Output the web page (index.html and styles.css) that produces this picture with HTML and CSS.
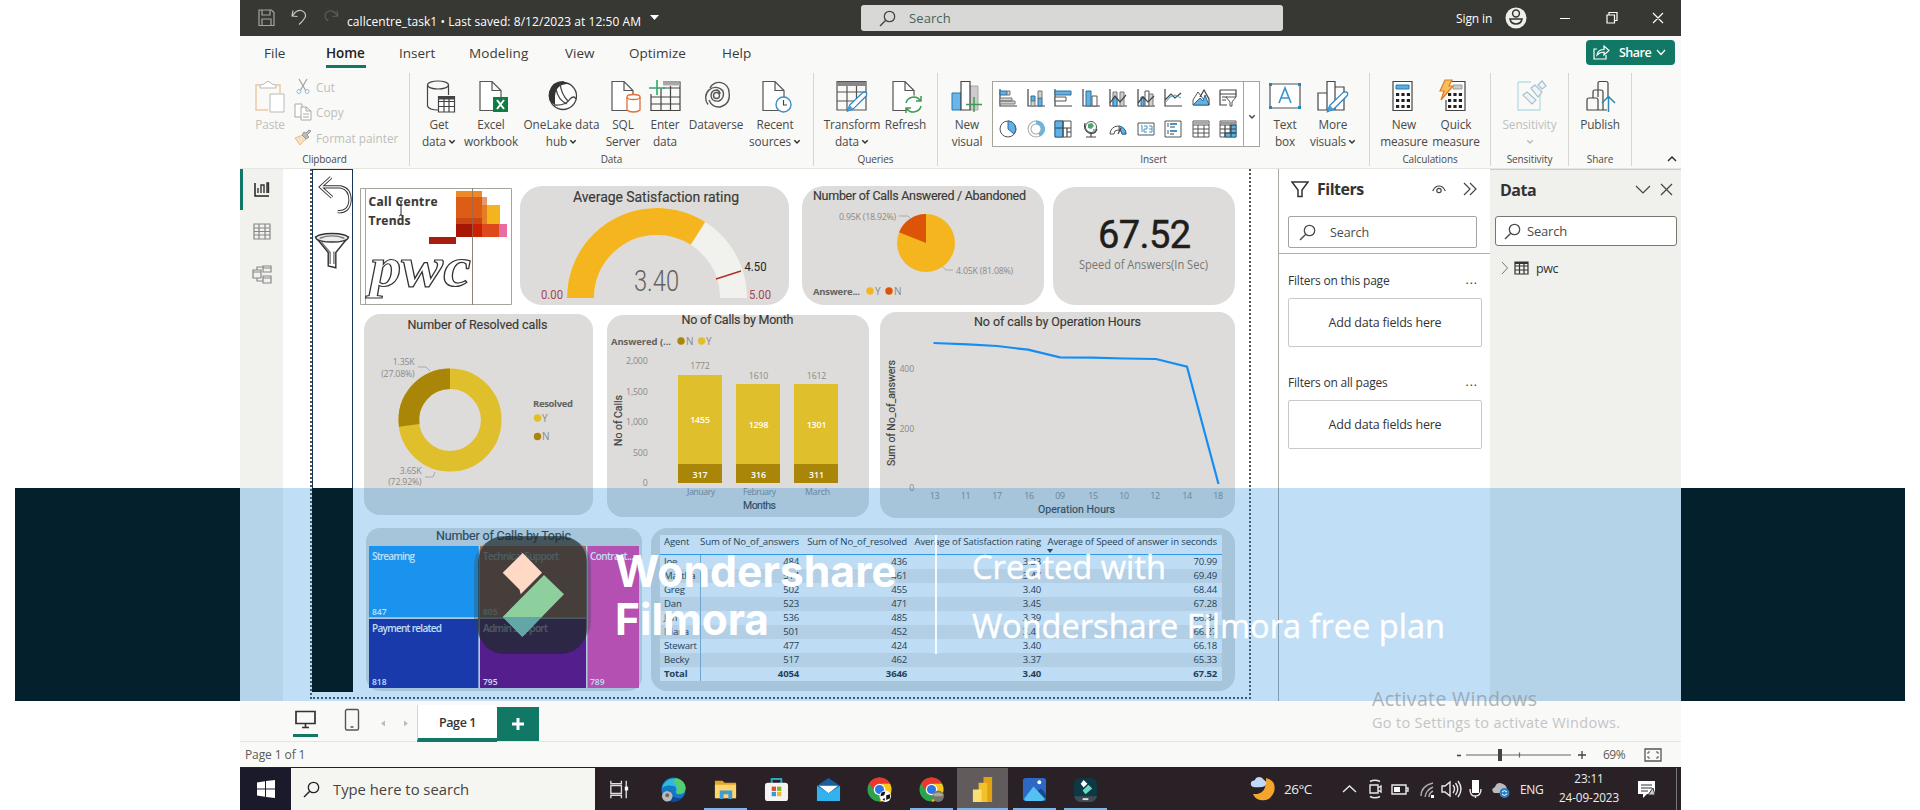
FILE: index.html
```html
<!DOCTYPE html>
<html lang="en">
<head>
<meta charset="utf-8">
<title>callcentre_task1</title>
<link rel="stylesheet" href="styles.css">
</head>
<body>
<svg class="defs" width="0" height="0">
  <symbol id="mag" viewBox="0 0 17 17"><circle cx="10.5" cy="6.5" r="5.2" fill="none" stroke="currentColor" stroke-width="1.3"/><path d="M6.8 10.2L1 16" stroke="currentColor" stroke-width="1.4"/></symbol>
  <symbol id="down" viewBox="0 0 8 6"><path d="M1.3 1.2L4 4L6.7 1.2" fill="none" stroke="currentColor" stroke-width="1.5"/></symbol>
  <symbol id="page" viewBox="0 0 32 34"><path d="M5 1.500H17L26 10.500V30.500H5ZM17 1.500V10.500H26" fill="#fff" stroke="#555" stroke-width="1.2"/></symbol>
  <symbol id="pencil" viewBox="0 0 24 24"><path d="M1.500 22.500L4 16L18 2.500Q21 1 22.500 3Q23 5 21.500 6.500L8 20Z" fill="#fff" stroke="#2484c0" stroke-width="1.3"/><path d="M1.500 22.500L4 16L8 20Z" fill="#45a0dc"/></symbol>
  <symbol id="chrome" viewBox="0 0 26 26"><circle cx="13" cy="13" r="12.500" fill="#2fa24c"/><path d="M2.200 6.700A12.500 12.500 0 0 1 23.800 6.700L13 7Z" fill="#e8392c"/><path d="M2.200 6.700L8 15L13 7H24Z" fill="#e8392c"/><path d="M23.900 7A12.500 12.500 0 0 1 13 25.500L18.500 15L15 7Z" fill="#fac619"/><circle cx="13" cy="13" r="6" fill="#fff"/><circle cx="13" cy="13" r="4.700" fill="#2d75e8"/></symbol>
</svg>

<div class="window">
  <header class="titlebar">
    <svg class="quick" viewBox="0 0 84 22"><g fill="none" stroke="#a5a5a0" stroke-width="1.2"><path d="M1 3H13.500L16 5.500V18.500H1ZM4 3V8H12V3M4 18.500V12H13V18.500"/><path d="M35 3.500L34 9L39.500 9.500M34.500 9Q38 3 43 3.500Q48 5 47.500 9.500Q46 13 41 17.500" stroke="#c5c5c0"/><path d="M79 3.500L80 9L74.500 9.500M79.500 9Q76 3 71 4Q66 6 67.500 11L70 14" stroke="#5d5d58"/></g></svg>
    <span class="doc">callcentre_task1 • Last saved: 8/12/2023 at 12:50 AM</span>
    <svg class="tri" viewBox="0 0 10 6"><path d="M0 0H9L4.500 5Z" fill="#fff"/></svg>
    <div class="topsearch"><svg class="mag" ><use href="#mag"/></svg><span>Search</span></div>
    <span class="signin">Sign in</span>
    <svg class="avatar" viewBox="0 0 22 22"><circle cx="11" cy="11" r="10.500" fill="#efefea"/><circle cx="11" cy="6.500" r="3.400" fill="none" stroke="#333" stroke-width="1.500"/><path d="M5 12H17Q16 17 11 17Q6 17 5 12Z" fill="none" stroke="#333" stroke-width="1.500"/></svg>
    <svg class="wctl" viewBox="0 0 106 14"><g stroke="#fff" fill="none" stroke-width="1.200"><path d="M0 7.500H10M47 4H54.500V12H47ZM49 4V1.500H57V9.500H54.500M93 2L103 12M103 2L93 12"/></g></svg>
  </header>

  <nav class="tabs">
    <span class="t-file">File</span><span class="t-home">Home</span><span class="t-insert">Insert</span><span class="t-model">Modeling</span><span class="t-view">View</span><span class="t-opt">Optimize</span><span class="t-help">Help</span>
    <button class="share"><svg width="17" height="15" viewBox="0 0 17 15"><path d="M4 4H1V14H13V10M4 10Q5 4.500 11 4.500V1L16 5.500L11 10V7Q7 7 4 10Z" fill="none" stroke="#fff" stroke-width="1.200"/></svg><b>Share</b><svg width="10" height="7" viewBox="0 0 10 7"><path d="M1 1L5 5.500L9 1" fill="none" stroke="#fff" stroke-width="1.300"/></svg></button>
  </nav>

  <section class="ribbon">
    <div class="group g-clip">
      <div class="btns disabled">
        <div class="btn"><svg viewBox="0 0 32 34"><path d="M6 5H2V30H14M22 5H26V13" fill="none" stroke="#eec9a4" stroke-width="1.500"/><path d="M6 8V5L10 4Q14 -1 18 4L22 5V8ZM16 14H30V32H16Z" fill="#fff" stroke="#b9b9b5"/></svg><span>Paste</span></div>
        <div class="minis">
          <div><svg viewBox="0 0 18 18"><path d="M5 1L12 13M13 1L6 13" stroke="#a3a3a0" stroke-width="1.200"/><path d="M3 13.500a2 2 0 1 0 4 0a2 2 0 1 0-4 0M11 13.500a2 2 0 1 0 4 0a2 2 0 1 0-4 0" fill="none" stroke="#9bbdd6"/></svg>Cut</div>
          <div><svg viewBox="0 0 18 18"><path d="M7 14H1V1H8V4M7 4H12L17 8V17H7ZM12 4V8H17M9 11H15M9 14H15" fill="#fff" stroke="#a9a9a5"/></svg>Copy</div>
          <div><svg viewBox="0 0 18 18"><path d="M1 9L9 6L12 10L6 16Z" fill="#f8dfc4" stroke="#e5bd97"/><path d="M8 6L12 10L15 8L13 6L17 2L15 1L12 4L10 3Z" fill="#bbb" stroke="#999"/></svg>Format painter</div>
        </div>
      </div><h6>Clipboard</h6>
    </div>

    <div class="group g-data">
      <div class="btns">
        <div class="btn"><svg viewBox="0 0 32 34"><g fill="none" stroke="#444" stroke-width="1.200"><ellipse cx="15" cy="5" rx="10.500" ry="4"/><path d="M4.500 5V26Q6 30 15 30M25.500 5V15"/><path d="M15.500 16.500H31.500V32H15.500ZM15.500 21.500H31.500M15.500 26.500H31.500M21 16.500V32M26 16.500V32" fill="#fff"/><path d="M15.500 18H31.500" stroke-width="3"/></g></svg><span>Get<br>data<i><svg><use href="#down"/></svg></i></span></div>
        <div class="btn"><svg viewBox="0 0 32 34"><use href="#page"/><path d="M18 17H33V32H18Z" fill="#107c41"/><path d="M22 20L29 29M29 20L22 29" stroke="#fff" stroke-width="2"/></svg><span>Excel<br>workbook</span></div>
        <div class="btn"><svg viewBox="0 0 32 34"><circle cx="17" cy="16" r="13.500" fill="#fff" stroke="#444" stroke-width="1.300"/><path d="M9 25Q1 21 3 12Q6 1 17 1L22 4Q10 4 9 16Z" fill="#333"/><path d="M10 9Q12 20 21 24M14 3Q15 14 22 21M8 25Q20 26 24 19Q28 15 30 19" fill="none" stroke="#444" stroke-width="1.300"/></svg><span>OneLake data<br>hub<i><svg><use href="#down"/></svg></i></span></div>
        <div class="btn"><svg viewBox="0 0 32 34"><use href="#page"/><path d="M20 17V30Q22 32 26.500 32Q31 32 33 30V17" fill="#fff" stroke="#dd7136" stroke-width="1.300"/><ellipse cx="26.500" cy="17" rx="6.500" ry="2.500" fill="#fff" stroke="#dd7136" stroke-width="1.300"/></svg><span>SQL<br>Server</span></div>
        <div class="btn"><svg viewBox="0 0 32 34"><path d="M2 14V30.500H31V2H14M2 17H31M2 24H31M12 8V30.500M21.500 6V30.500M14 8H31" fill="none" stroke="#444" stroke-width="1.200"/><path d="M14 4H31" stroke="#aaa" stroke-width="3"/><path d="M8 0V15M0 8H16" stroke="#35a56b" stroke-width="1.600"/></svg><span>Enter<br>data</span></div>
        <div class="btn"><svg viewBox="0 0 32 34"><g fill="none" stroke="#555" stroke-width="1.400"><path d="M8 24.500A9.500 10 0 1 1 23 11Q25 18 19 21Q12 22 11 16Q11 10 17 10Q20 11 20 14"/><path d="M10 8A10 10 0 0 1 29 12Q31 24 20 27Q12 27.500 9 20"/><circle cx="16.500" cy="15.500" r="3"/></g></svg><span>Dataverse</span></div>
        <div class="btn"><svg viewBox="0 0 32 34"><use href="#page" x="-1"/><circle cx="24.500" cy="24.500" r="7.500" fill="#fff" stroke="#3991bf" stroke-width="1.400"/><path d="M24.500 20V25H28" fill="none" stroke="#444" stroke-width="1.200"/></svg><span>Recent<br>sources<i><svg><use href="#down"/></svg></i></span></div>
      </div><h6>Data</h6>
    </div>

    <div class="group g-query">
      <div class="btns">
        <div class="btn"><svg viewBox="0 0 32 34"><path d="M1 1.500H30V30H1ZM1 12H30M1 21H20M11 6V30M20.500 6V22" fill="none" stroke="#555" stroke-width="1.200"/><path d="M1 4H30" stroke="#888" stroke-width="4"/><use href="#pencil" x="10" y="10" width="22" height="23"/></svg><span>Transform<br>data<i><svg><use href="#down"/></svg></i></span></div>
        <div class="btn"><svg viewBox="0 0 32 34"><use href="#page" x="-2"/><circle cx="23.500" cy="24.500" r="9" fill="#fff"/><path d="M16 23A8 8 0 0 1 30 20M31 16V21H26M31 26A8 8 0 0 1 17 29M16 33V28H21" fill="none" stroke="#3e9a55" stroke-width="1.500"/></svg><span>Refresh</span></div>
      </div><h6>Queries</h6>
    </div>

    <div class="group g-insert">
      <div class="btns">
        <div class="btn"><svg viewBox="0 0 32 34"><path d="M1 13H10V30H1Z" fill="#6ab5ea" stroke="#2779ae"/><path d="M19 6H27V30H19Z" fill="#ccc" stroke="#aaa"/><path d="M10 1.500H19V30H10Z" fill="#fff" stroke="#444" stroke-width="1.200"/><path d="M23 17V32M15 24.500H31" stroke="#3e9a55" stroke-width="1.500"/></svg><span>New<br>visual</span></div>
        <div class="gallery">
          <div class="cells">
            <svg viewBox="0 0 18 18"><path d="M1 0V17H18" class="ax"/><path d="M1 2H8V6H1Z" class="bl"/><path d="M8 2H11V6H8ZM1 9H13V12H1ZM1 12H16V15H1Z" class="gr"/></svg>
            <svg viewBox="0 0 18 18"><path d="M1 0V17H18" class="ax"/><path d="M4 7H8V12H4ZM11 9H15V17H11Z" class="bl"/><path d="M4 12H8V17H4ZM11 2H15V9H11Z" class="gr"/></svg>
            <svg viewBox="0 0 18 18"><path d="M1 0V17H18" class="ax"/><path d="M1 2H17V6H1Z" class="bl"/><path d="M1 8H12V12H1Z" class="wh"/></svg>
            <svg viewBox="0 0 18 18"><path d="M1 0V17H18" class="ax"/><path d="M4 2H9V17H4Z" class="bl"/><path d="M10 7H15V17H10Z" class="wh"/></svg>
            <svg viewBox="0 0 18 18"><path d="M1 0V17H18" class="ax"/><path d="M4 3H8V17H4ZM11 3H15V17H11Z" class="gr"/><path d="M4 9H8V17H4Z" class="bl"/><path d="M1 14L6 7L11 13L17 6" class="ax"/></svg>
            <svg viewBox="0 0 18 18"><path d="M1 0V17H18" class="ax"/><path d="M4 8H7V17H4Z" class="bl"/><path d="M8 2H12V17H8Z" class="wh"/><path d="M12 5H16V17H12Z" class="gr"/><path d="M1 14L6 8L11 13L17 7" class="ax"/></svg>
            <svg viewBox="0 0 18 18"><path d="M1 0V17H18M1 11L7 5L11 9L17 4" class="ax"/><path d="M1 14L6 8L11 6L17 9" fill="none" stroke="#4c9dcc"/></svg>
            <svg viewBox="0 0 18 18"><path d="M1 11L6 3L12 11L17 16H1Z" class="wh"/><path d="M1 16L8 9L11 12L13 6L17 16Z" class="bl"/><path d="M8 8L12 1L17 10V16" class="ax"/></svg>
            <svg viewBox="0 0 18 18"><path d="M1 1H17V8M1 1V16H8M1 5H17M3 8H8M3 11H7" class="ax"/><path d="M7 8H17L13 13V17H11V13Z" class="wh"/></svg>
            <svg viewBox="0 0 18 18"><circle cx="9" cy="9" r="8" class="wh"/><path d="M9 9V1A8 8 0 0 1 15 14Z" class="bl"/></svg>
            <svg viewBox="0 0 18 18"><circle cx="9" cy="9" r="6.500" fill="none" stroke="#aaa" stroke-width="4"/><circle cx="9" cy="9" r="6.500" fill="none" stroke="#fff" stroke-width="2"/><path d="M9 2.500A6.500 6.500 0 0 1 12 15" fill="none" stroke="#6eb4df" stroke-width="4"/></svg>
            <svg viewBox="0 0 18 18"><path d="M1 1H17V17H1Z" class="wh"/><path d="M1 1H9V8H1ZM1 8H9V17H1Z" class="bl"/><path d="M9 8H17M13 8V17M9 1V17M13 12H17" class="ax"/></svg>
            <svg viewBox="0 0 18 18"><circle cx="9" cy="7" r="5.500" class="wh"/><path d="M6 4L10 3L12 6L9 9L6 8ZM11 9L13 9L11 11Z" fill="#52a573"/><path d="M3 3Q1 10 7 13Q13 15 15 9M9 14V17M4 17H14" class="ax"/></svg>
            <svg viewBox="0 0 18 18"><path d="M1 14A8 8 0 0 1 17 14H13A4 4 0 0 0 5 14Z" class="wh"/><path d="M10 6A8 8 0 0 1 17 14H13A4 4 0 0 0 10 10Z" class="bl"/><path d="M9 14L12 8" class="ax"/></svg>
            <svg viewBox="0 0 18 18"><path d="M1 3H17V15H1Z" class="wh"/><path d="M4 6L5 5.500V12M7 6H10V9H7V12H10M12 6H15V12H12M12 9H15" fill="none" stroke="#3f96c8"/></svg>
            <svg viewBox="0 0 18 18"><path d="M1 1H17V17H1ZM4 3V7M4 10V14" class="wh"/><path d="M6 4H13M6 11H13" stroke="#3f96c8" stroke-width="2"/><path d="M6 7H11M6 14H10" class="ax"/></svg>
            <svg viewBox="0 0 18 18"><path d="M1 1H17V17H1ZM1 5H17M1 9H17M1 13H17M6 5V17M12 5V17" class="wh"/><path d="M1 3H17" stroke="#aaa" stroke-width="2"/></svg>
            <svg viewBox="0 0 18 18"><path d="M1 1H17V17H1Z" class="wh"/><path d="M11 5H17V13H11ZM6 13H17V17H6Z" class="bl"/><path d="M1 5H17M1 9H17M1 13H17M6 5V17M12 5V17" class="ax"/><path d="M1 3H17" stroke="#999" stroke-width="2"/></svg>
          </div>
          <div class="more"><svg width="8" height="6"><use href="#down"/></svg></div>
        </div>
        <div class="btn"><svg viewBox="0 0 32 34"><path d="M1 4H31V28H1Z" fill="#fff" stroke="#555" stroke-width="1.200"/><path d="M0 3H3V6H0ZM29 3H32V6H29ZM0 26H3V29H0ZM29 26H32V29H29Z" fill="#2484c0"/><path d="M10 23L16 8L22 23M12 18H20" fill="none" stroke="#3795ca" stroke-width="1.600"/></svg><span>Text<br>box</span></div>
        <div class="btn"><svg viewBox="0 0 32 34"><path d="M1 13H10V30H1ZM18 7H27V30H18ZM10 1.500H18V30H10Z" fill="#fff" stroke="#444" stroke-width="1.200"/><use href="#pencil" x="9" y="10" width="23" height="23"/></svg><span>More<br>visuals<i><svg><use href="#down"/></svg></i></span></div>
      </div><h6>Insert</h6>
    </div>

    <div class="group g-calc">
      <div class="btns">
        <div class="btn"><svg viewBox="0 0 32 34"><path d="M5 1.500H24V30.500H5Z" fill="#fff" stroke="#444" stroke-width="1.200"/><path d="M8 5H21V9H8Z" fill="#5aaee2" stroke="#2779ae"/><path d="M8 14.500H22M8 20.500H22M8 26.500H22" stroke="#222" stroke-width="3.200" stroke-dasharray="3.200 2.200"/></svg><span>New<br>measure</span></div>
        <div class="btn"><svg viewBox="0 0 32 34"><path d="M7 1.500H25V30.500H6V20" fill="#fff" stroke="#444" stroke-width="1.200"/><path d="M13 5H22V9H13Z" fill="#ccc" stroke="#999"/><path d="M8 14.500H22M8 20.500H22M8 26.500H22" stroke="#222" stroke-width="3.200" stroke-dasharray="3.200 2.200"/><path d="M5 0H12L9 6H13L1 20L4 11H0Z" fill="#f8bd5c" stroke="#df7d2b" stroke-width="1.200"/></svg><span>Quick<br>measure</span></div>
      </div><h6>Calculations</h6>
    </div>

    <div class="group g-sens">
      <div class="btns disabled">
        <div class="btn"><svg viewBox="0 0 32 34"><path d="M4 2H17M26 15V30H4V2" fill="none" stroke="#b9dbe6" stroke-width="1.300"/><path d="M9 15L13 12L22 20L18 24ZM17 8L21 5L28 12L24 17ZM24 5L28 1L32 6L28 9Z" fill="#eef5f8" stroke="#a8bfcd" stroke-width="1.200"/></svg><span>Sensitivity<br><i class="solo"><svg><use href="#down"/></svg></i></span></div>
      </div><h6>Sensitivity</h6>
    </div>
    <div class="group g-share">
      <div class="btns">
        <div class="btn"><svg viewBox="0 0 32 34"><path d="M14 17V3Q14 1.500 15.500 1.500H22Q24 1.500 24 3V17M9 18V12Q9 10 11 10H17Q19 10 19 12V30M3 20Q3 18 5 18H12Q14 18 14 20V30H3ZM14 30H23" fill="none" stroke="#444" stroke-width="1.200"/><path d="M24.500 32V17M18 23L24.500 16.500L31 23" fill="none" stroke="#2e88ad" stroke-width="1.500"/></svg><span>Publish</span></div>
      </div><h6>Share</h6>
    </div>
    <svg class="collapse" viewBox="0 0 10 6"><path d="M1 5L5 1L9 5" fill="none" stroke="#333" stroke-width="1.500"/></svg>
  </section>

  <main class="work">
    <aside class="rail">
      <svg width="18" height="18" viewBox="0 0 18 18"><path d="M2 2V15H16" fill="none" stroke="#222" stroke-width="1.500"/><path d="M5 7V12M8 12V4H11V12M14 12V2H15.500V12" fill="none" stroke="#333" stroke-width="1.400"/></svg>
      <svg width="18" height="17" viewBox="0 0 18 17"><path d="M1 1H17V16H1ZM1 5H17M1 8.500H17M1 12H17M6 1V16M12 1V16" fill="none" stroke="#888" stroke-width="1.200"/></svg>
      <svg width="20" height="20" viewBox="0 0 20 20"><path d="M1 6H9V14H1ZM11 2H19V8H11ZM11 12H19V19H11ZM1 8H9M11 4H19M11 14H19M5 6V3H11M5 14V17H11" fill="none" stroke="#888" stroke-width="1.200"/></svg>
    </aside>

    <div class="canvas">
      <div class="pageedge"></div>
      <div class="strip">
        <svg viewBox="312 169 41 110"><path d="M331 175L320 185L332 196M320 185H341Q351 187 351 199Q350 212 338 211" fill="none" stroke="#333" stroke-width="3.500"/><path d="M331 175L320 185L332 196M320 185H341Q351 187 351 199Q350 212 338 211" fill="none" stroke="#fff" stroke-width="1.500"/><path d="M315 238L328 254V268L336 270V254L349 238Z" fill="#fff" stroke="#333" stroke-width="1.500"/><ellipse cx="332" cy="238.500" rx="17" ry="4.500" fill="#eee" stroke="#333" stroke-width="1.500"/><path d="M319 239Q332 234 345 239M320 242L330 254V266M334 266V253" fill="none" stroke="#777" stroke-width="1.500"/></svg>
      </div>

      <div class="visual v-logo">
        <svg viewBox="360 188 153 118"><path d="M360.500 188.500H511.500V304.500H360.500ZM365.500 188V305M472.500 188V305" fill="#fff" stroke="#a5a59e"/>
          <path d="M456 191H482V225H456Z" fill="#ee8a25"/><path d="M456 197H482V225H456Z" fill="#dd5d16"/><path d="M482 197H487V225H482Z" fill="#e9986b"/><path d="M487 205H500V225H487Z" fill="#f2b51d"/><path d="M482 205H487V225H482Z" fill="#e57d22"/><path d="M456 218H482V225H456Z" fill="#cc4515"/><path d="M456 224H472V237H456Z" fill="#a61602"/><path d="M472 224H482V237H472Z" fill="#cb2003"/><path d="M482 224H499V237H482Z" fill="#dc491b"/><path d="M499 224H507V237H499Z" fill="#e86ba2"/><path d="M429 237H456V244H429Z" fill="#a91d10"/><path d="M472.500 188V305" stroke="#8a6d5c" opacity=".6"/>
          <g class="ttl b"><text x="368.500" y="205.500" textLength="69">Call Centre</text><text x="368.500" y="224.500" textLength="42">Trends</text></g>
          <path d="M399 200Q401 200 401 203V214Q401 216 399 216M403 200Q401 200 401 203M401 214Q401 216 403 216" fill="none" stroke="#333"/>
          <text x="370" y="286" textLength="101" lengthAdjust="spacingAndGlyphs" class="pwc">pwc</text></svg>
      </div>

      <div class="visual v-gauge">
        <svg viewBox="520 186 269 119"><text x="573" y="201.500" textLength="166" class="ttl m14">Average Satisfaction rating</text>
          <path d="M580.500 298A76.500 76.500 0 0 1 733.500 298" pathLength="100" fill="none" stroke="#f1f1ee" stroke-width="27"/>
          <path d="M580.500 298A76.500 76.500 0 0 1 733.500 298" pathLength="100" fill="none" stroke="#f5b51e" stroke-width="27" stroke-dasharray="68 100"/>
          <path d="M716 279L741 271" stroke="#b02f28" stroke-width="1.500"/>
          <text x="634" y="291" textLength="45" lengthAdjust="spacingAndGlyphs" class="din" font-size="29" fill="#63625e">3.40</text>
          <g class="din small"><text x="541" y="299" textLength="22" lengthAdjust="spacingAndGlyphs" fill="#a34553">0.00</text><text x="744.500" y="270.500" textLength="22" lengthAdjust="spacingAndGlyphs" fill="#222">4.50</text><text x="749" y="299" textLength="22" lengthAdjust="spacingAndGlyphs" fill="#a34553">5.00</text></g></svg>
      </div>

      <div class="visual v-pie">
        <svg viewBox="802 186 242 119"><text x="813" y="199.500" textLength="213" class="ttl">Number of Calls Answered / Abandoned</text>
          <circle cx="926" cy="243" r="29" fill="#f5b51e"/><path d="M926 243V214A29 29 0 0 0 899.100 232.200Z" fill="#dc5408"/>
          <g class="lab"><text x="839" y="219.500" textLength="57">0.95K (18.92%)</text><text x="956" y="273.500" textLength="57">4.05K (81.08%)</text></g>
          <path d="M899 216H908L911 219M943 267L946 270H953" fill="none" stroke="#aaa"/>
          <text x="813" y="294.500" textLength="47" class="leg">Answere...</text><circle cx="870" cy="291" r="3.700" fill="#f5b51e"/><circle cx="889" cy="291" r="3.700" fill="#dc5408"/><g class="lg"><text x="875" y="294.500">Y</text><text x="894" y="294.500">N</text></g></svg>
      </div>

      <div class="visual v-kpi">
        <svg viewBox="1053 187 182 118"><text x="1098" y="248" textLength="93" class="din" font-size="38" fill="#1f1e1b" stroke="#1f1e1b" stroke-width=".5">67.52</text><text x="1079" y="269" textLength="129" lengthAdjust="spacingAndGlyphs" font-size="12" fill="#777671">Speed of Answers(In Sec)</text></svg>
      </div>

      <div class="visual v-res">
        <svg viewBox="364 314 229 201"><text x="407.500" y="329" textLength="140" class="ttl">Number of Resolved calls</text>
          <circle cx="450" cy="420" r="41.200" fill="none" stroke="#e0bf2c" stroke-width="20.600"/><path d="M450 378.800A41.200 41.200 0 0 0 409.200 425.400" fill="none" stroke="#a98607" stroke-width="20.600"/>
          <g class="lab end"><text x="414.500" y="365">1.35K</text><text x="414.500" y="376.500">(27.08%)</text><text x="421.500" y="473.500">3.65K</text><text x="421.500" y="485">(72.92%)</text></g>
          <path d="M418 367H426L430 371M425 477H433L435 472" fill="none" stroke="#aaa"/>
          <text x="533" y="406.500" textLength="40" class="leg">Resolved</text><circle cx="537.500" cy="418" r="3.700" fill="#e0bf2c"/><circle cx="537.500" cy="436.500" r="3.700" fill="#a98607"/><g class="lg"><text x="542" y="421.500">Y</text><text x="542" y="440">N</text></g></svg>
      </div>

      <div class="visual v-month">
        <svg viewBox="607 315 262 202"><text x="681.500" y="323.500" textLength="112" class="ttl">No of Calls by Month</text>
          <text x="611" y="344.500" textLength="60" class="leg">Answered (...</text><circle cx="681" cy="341" r="3.700" fill="#a98607"/><circle cx="701.500" cy="341" r="3.700" fill="#e0bf2c"/><g class="lg"><text x="686" y="344.500">N</text><text x="706" y="344.500">Y</text></g>
          <g class="lab end"><text x="647.500" y="363.500">2,000</text><text x="647.500" y="394.500">1,500</text><text x="647.500" y="425">1,000</text><text x="647.500" y="455.500">500</text><text x="647.500" y="486">0</text></g>
          <path d="M678 375H722V464H678ZM736 384H780V464H736ZM794 384H838V464H794Z" fill="#e0bf2c"/><path d="M678 464H722V483H678ZM736 464H780V483H736ZM794 464H838V483H794Z" fill="#a98607"/>
          <g class="lab mid"><text x="700" y="369">1772</text><text x="758.500" y="378.500">1610</text><text x="816.500" y="378.500">1612</text><text x="701" y="495" textLength="28">January</text><text x="759.500" y="495" textLength="33">February</text><text x="817.500" y="495" textLength="25">March</text></g>
          <g class="val mid"><text x="700" y="423">1455</text><text x="758.500" y="428">1298</text><text x="816.500" y="428">1301</text><text x="700" y="477.500">317</text><text x="758.500" y="477.500">316</text><text x="816.500" y="477.500">311</text></g>
          <text x="743" y="508.500" textLength="33" class="ax-t">Months</text><text transform="translate(621.500 446) rotate(-90)" textLength="51" class="ax-t">No of Calls</text></svg>
      </div>

      <div class="visual v-hours">
        <svg viewBox="880 312 355 206"><text x="974" y="325.500" textLength="167" class="ttl">No of calls by Operation Hours</text>
          <path d="M933.500 343L968 344.300L997 346L1028 349.700L1060 357.300L1092 357.700L1124 358.500L1156 359L1187 366.700L1218.500 484" fill="none" stroke="#168df2" stroke-width="2.200"/>
          <g class="lab end"><text x="914" y="371.500">400</text><text x="914" y="431.500">200</text><text x="914" y="490.500">0</text></g>
          <g class="lab mid"><text x="934.500" y="499">13</text><text x="965.500" y="499">11</text><text x="997" y="499">17</text><text x="1029" y="499">16</text><text x="1060" y="499">09</text><text x="1093" y="499">15</text><text x="1124" y="499">10</text><text x="1155" y="499">12</text><text x="1187" y="499">14</text><text x="1218" y="499">18</text></g>
          <text x="1038" y="512.500" textLength="77" class="ax-t">Operation Hours</text><text transform="translate(894.500 466) rotate(-90)" textLength="106" class="ax-t">Sum of No_of_answers</text></svg>
      </div>

      <div class="visual v-topic">
        <svg viewBox="366 528 276 163"><text x="436" y="540" textLength="135" class="ttl">Number of Calls by Topic</text>
          <path d="M369 546H479V617.500H369Z" fill="#219bf3"/><path d="M369 619H478.500V688H369Z" fill="#20259a"/><path d="M480 546H586V617.500H480Z" fill="#e66c37"/><path d="M480 619H586V688H480Z" fill="#6f0073"/><path d="M587.300 546H639V688H587.300Z" fill="#ee42a3"/><path d="M479.300 546V688M369 618.200H586.700M586.700 546V688" stroke="#e8e8e5" stroke-width="1.200"/>
          <g class="tile"><text x="372" y="559.500" textLength="43">Streaming</text><text x="372" y="632" textLength="70">Payment related</text><text x="483" y="559.500" textLength="76">Technical Support</text><text x="483" y="631.500" textLength="65">Admin Support</text><text x="590" y="559.500" textLength="44">Contract...</text></g>
          <g class="tnum"><text x="372" y="615">847</text><text x="372" y="684.500">818</text><text x="483" y="615">805</text><text x="483" y="684.500">795</text><text x="590" y="684.500">789</text></g></svg>
      </div>

      <div class="visual v-table">
        <table>
          <thead><tr><th>Agent</th><th>Sum of No_of_answers</th><th>Sum of No_of_resolved</th><th>Average of Satisfaction rating</th><th>Average of Speed of answer in seconds<s></s></th></tr></thead>
          <tbody>
            <tr><td>Joe</td><td>484</td><td>436</td><td>3.33</td><td>70.99</td></tr>
            <tr><td>Martha</td><td>514</td><td>461</td><td>3.47</td><td>69.49</td></tr>
            <tr><td>Greg</td><td>502</td><td>455</td><td>3.40</td><td>68.44</td></tr>
            <tr><td>Dan</td><td>523</td><td>471</td><td>3.45</td><td>67.28</td></tr>
            <tr><td>Jim</td><td>536</td><td>485</td><td>3.39</td><td>66.34</td></tr>
            <tr><td>Diana</td><td>501</td><td>452</td><td>3.41</td><td>66.27</td></tr>
            <tr><td>Stewart</td><td>477</td><td>424</td><td>3.40</td><td>66.18</td></tr>
            <tr><td>Becky</td><td>517</td><td>462</td><td>3.37</td><td>65.33</td></tr>
            <tr class="total"><td>Total</td><td>4054</td><td>3646</td><td>3.40</td><td>67.52</td></tr>
          </tbody>
        </table>
      </div>
    </div>

    <aside class="filters">
      <div class="fhead">
        <div class="phead"><svg width="18" height="17" viewBox="0 0 18 17"><path d="M1 1H17L11 9V15.500H7V9Z" fill="none" stroke="#333" stroke-width="1.500"/></svg><h2>Filters</h2><svg class="eye" viewBox="0 0 14 9"><path d="M.7 6Q3 1 7 1Q11 1 13.300 6" fill="none" stroke="#444" stroke-width="1.200"/><circle cx="7" cy="5.500" r="2.200" fill="none" stroke="#444" stroke-width="1.200"/></svg><svg width="14" height="14" viewBox="0 0 14 14"><path d="M1 1L7 7L1 13M7 1L13 7L7 13" fill="none" stroke="#444" stroke-width="1.200"/></svg></div>
        <div class="sbox"><svg class="mag"><use href="#mag"/></svg>Search</div>
      </div>
      <div class="frow"><span>Filters on this page</span><em>...</em></div>
      <div class="drop">Add data fields here</div>
      <div class="frow second"><span>Filters on all pages</span><em>...</em></div>
      <div class="drop">Add data fields here</div>
    </aside>

    <aside class="datapane">
      <div class="phead"><h2>Data</h2><svg width="38" height="13" viewBox="0 0 38 13"><path d="M1 3L8 10L15 3M26 1L37 12M37 1L26 12" fill="none" stroke="#444" stroke-width="1.200"/></svg></div>
      <div class="sbox"><svg class="mag"><use href="#mag"/></svg>Search</div>
      <div class="node"><svg width="28" height="14" viewBox="0 0 28 14"><path d="M1 1L6.500 7L1 13" fill="none" stroke="#777"/><path d="M14 1H27V13H14ZM14 5H27M14 9H27M18.500 1V13M23 1V13" fill="none" stroke="#333" stroke-width="1.200"/><path d="M14 2H27" stroke="#333" stroke-width="2"/></svg>pwc</div>
    </aside>
  </main>

  <div class="pagetabs">
    <svg class="views" viewBox="0 0 120 36"><path d="M1 3.500H20V15.500H1ZM7 19.500H14M10.500 15.500V19.500" fill="none" stroke="#333" stroke-width="1.700"/><path d="M-2 26H23V29H-2Z" fill="#117865"/><rect x="50.500" y="1.500" width="13" height="20.500" rx="1.500" fill="none" stroke="#555" stroke-width="1.400"/><path d="M55.500 19H58.500" stroke="#555" stroke-width="1.500"/><path d="M90 12.500L86 15.500L90 18.500ZM109 12.500L113 15.500L109 18.500Z" fill="#bcbcb8"/></svg>
    <div class="ptab">Page 1</div><div class="plus"><svg width="12" height="12" viewBox="0 0 12 12"><path d="M6 0V12M0 6H12" stroke="#fff" stroke-width="3"/></svg></div>
  </div>
  <div class="status"><span>Page 1 of 1</span><svg class="zoomer" viewBox="0 0 133 20"><path d="M1 10.500H5" stroke="#444" stroke-width="1.600"/><path d="M10 10H115M63.500 7.500V12.500" stroke="#666" stroke-width="1.200"/><path d="M42 4H46V16H42Z" fill="#444"/><path d="M122 10H130M126 6V14" stroke="#444" stroke-width="1.300"/></svg><span class="pct">69%</span><svg class="fit" viewBox="0 0 18 14"><path d="M1 1H17V13H1Z" fill="none" stroke="#555" stroke-width="1.300"/><path d="M4 6V4H6M12 4H14V6M14 8V10H12M6 10H4V8" fill="none" stroke="#555"/></svg></div>

  <footer class="taskbar">
    <div class="start"><svg width="18" height="18" viewBox="0 0 18 18"><path d="M0 2.500L8 1.300V8.500H0ZM9 1.100L18 0V8.500H9ZM0 9.500H8V16.700L0 15.500ZM9 9.500H18V18L9 16.900Z" fill="#fff"/></svg></div>
    <div class="tsearch"><svg class="mag"><use href="#mag"/></svg>Type here to search</div>
    <div class="apps">
      <div class="app taskview"><svg viewBox="0 0 26 26"><path d="M4 4V7H15V4M4 22V19H15V22M4 9H15V17H4ZM20 4V22" fill="none" stroke="#ddd" stroke-width="1.400"/><path d="M18.500 10H22V14H18.500Z" fill="#fff"/></svg></div>
      <div class="app edge"><svg viewBox="0 0 26 26"><circle cx="13" cy="13" r="12.500" fill="#1777c7"/><path d="M1 12A12.500 12.500 0 0 1 25.500 11Q26 18 18 18Q14 17 16 13Q16 9 11 9Q4 8 1 12Z" fill="#2fb9dc"/><path d="M16 1Q26 4 25.500 12Q24 18 18 18Q15 17 16.500 14Q18 9 12 4Z" fill="#55cc6e"/><path d="M9 14Q10 22 20 22L23 20Q19 25.500 13 25.500Q5 24 4 17Z" fill="#0d4a98"/><circle cx="6.500" cy="20" r="5.500" fill="#b9b9b7"/><circle cx="6.500" cy="19" r="2" fill="#666"/></svg></div>
      <div class="app on folder"><svg viewBox="0 0 26 26"><path d="M2 4H10L12 6H24V22H2Z" fill="#e5a32a"/><path d="M2 8H24V22H2Z" fill="#ffd56e"/><path d="M7 14H20V23H16V18H11V23H7Z" fill="#3f9cd6"/></svg></div>
      <div class="app store"><svg viewBox="0 0 26 26"><path d="M8 7V2H18V7" fill="none" stroke="#2aa6bd" stroke-width="2"/><rect x="1" y="6" width="24" height="19" rx="3" fill="#f4f4f2"/><path d="M8 10H12.500V14.500H8Z" fill="#e74b2b"/><path d="M13.500 10H18V14.500H13.500Z" fill="#7cb82f"/><path d="M8 15.500H12.500V20H8Z" fill="#2d9de0"/><path d="M13.500 15.500H18V20H13.500Z" fill="#f5b71e"/></svg></div>
      <div class="app mail"><svg viewBox="0 0 26 26"><path d="M1 9L13 1L25 9V25H1Z" fill="#175f9e"/><path d="M3 9H23L13 17Z" fill="#f5f5f5"/><path d="M1 9L13 17L25 9V25H1Z" fill="#33b3ee"/><path d="M5 10H21L13 16Z" fill="#fff"/></svg></div>
      <div class="app chrome"><svg viewBox="0 0 26 26"><use href="#chrome" width="26" height="26"/><circle cx="19" cy="20" r="6" fill="#fff"/><path d="M15 16L19 15L18 19L14 20ZM20 19L24 18L24 22L20 24ZM16 23L19 22L18 25Z" fill="#111"/></svg></div>
      <div class="app on chrome2"><svg viewBox="0 0 26 26"><use href="#chrome" width="26" height="26"/><circle cx="20" cy="20" r="6" fill="#77766e"/><path d="M14.500 18Q20 14 25.500 18L24 20H16Z" fill="#aaa79c"/></svg></div>
      <div class="app on bi"><svg viewBox="0 0 26 26"><path d="M14 0H23V26H14Z" fill="#e0a30f"/><path d="M9 6H18V26H9Z" fill="#f2c22d"/><path d="M3 13H12V26H3Z" fill="#fbdf71"/></svg></div>
      <div class="app on photos"><svg viewBox="0 0 26 26"><rect x="1" y="1" width="24" height="24" rx="3" fill="#2d69c4"/><path d="M12 17L20 12L25 18V22L20 25Z" fill="#1a4793"/><path d="M2 23L12 10L24 23Q22 25 20 25H4Z" fill="#54c1f0"/><circle cx="18" cy="5.500" r="2" fill="#fff"/></svg></div>
      <div class="app on film"><svg viewBox="0 0 26 26"><rect x="1" y="1" width="24" height="24" rx="6" fill="#0d3844"/><path d="M11 3L15 7L11 11L8 7Z" fill="#fff"/><path d="M16 8L20 12L13 18L10 14Z" fill="#64dbc0"/><path d="M1 20H25Q23 26 18 26H8Q3 26 1 20Z" fill="#3e4b55"/><path d="M10 23H16" stroke="#ddd" stroke-width="2"/></svg></div>
    </div>
    <div class="tray">
      <svg class="weather" viewBox="0 0 26 26"><path d="M16 2Q27 5 24 16Q20 26 10 24Q5 23 3 18Q17 19 16 2Z" fill="#f4a52c"/><path d="M3 11Q-1 9 2 5Q5 5 6 2Q11 -1 14 4Q18 6 15 10Q12 12 3 11Z" fill="#c0d9f8"/></svg>
      <span class="temp">26°C</span>
      <svg class="icons" viewBox="0 0 170 26"><g fill="none" stroke="#e8e8e8" stroke-width="1.400"><path d="M1 16L7.500 10L14 16M28 9H36V17H28ZM36 12L39 10V16L36 14M28 5.500Q33 3 38 5.500M28 20.500Q33 23 38 20.500M50 9H64V18H50ZM64 12H66V15H64"/><path d="M79 20Q79 10 91 7M83 21Q84 14 91 11M87 21Q87 17 91 15" stroke="#aaa"/><path d="M100 10H103L108 6V20L103 16H100ZM111 9Q114 13 111 17M113.500 7Q118 13 113.500 19M116 5Q122 13 116 21"/><path d="M128 13Q128 20 133 20Q139 20 139 13M133.500 20V22"/></g><path d="M52 11H58V16H52ZM130 4H137V17H130ZM89 19H92V22H89Z" fill="#fff"/><path d="M152 17Q148 13 153 11Q155 5 161 8Q166 10 165 17Z" fill="#bbb"/><circle cx="162.500" cy="17" r="5" fill="#2e7ec1"/><path d="M160 16Q162 13 165 16M165 18Q162 21 160 18" fill="none" stroke="#fff"/></svg>
      <span class="lang">ENG</span><span class="clock">23:11<br>24-09-2023</span>
      <svg class="note" viewBox="0 0 18 18"><path d="M0 1H17V14H9L5 18V14H0Z" fill="#fff"/><path d="M3 5H14M3 8H14M3 11H10" stroke="#333" stroke-width="1.200"/><path d="M10 15L15 8L17 15Z" fill="#ccc" stroke="#333"/></svg>
      <i class="desk"></i>
    </div>
  </footer>
</div>

<div class="watermark">
  <div class="side"></div><div class="tint"></div><div class="side"></div>
  <svg viewBox="15 488 1890 213"><path d="M312 488H353V692H312Z" fill="#04202c"/>
    <rect x="474" y="537" width="117" height="113" rx="29" fill="#33444b" opacity=".3"/><rect x="478" y="536" width="109" height="118" rx="26" fill="#1b2724" opacity=".6"/>
    <path d="M544 575L564 594.300L522.300 636.700L502.700 617Z" fill="#8ecf9e"/><path d="M502.700 617H541.700L522.300 636.700Z" fill="#62a6a8"/><path d="M522.700 553L542 572.700L520.700 594.300L519.500 589.500L502.700 572.700Z" fill="#ffd9c6"/>
    <g class="wm-b"><text x="615" y="587" textLength="282" lengthAdjust="spacingAndGlyphs">Wondershare</text><text x="615" y="634.500" textLength="154" lengthAdjust="spacingAndGlyphs">Filmora</text></g>
    <path d="M936 535V654" stroke="#fff" stroke-width="2" opacity=".9"/>
    <g class="wm-t"><text x="972" y="578.500" textLength="194" lengthAdjust="spacingAndGlyphs">Created with</text><text x="972" y="638" textLength="473" lengthAdjust="spacingAndGlyphs">Wondershare Filmora free plan</text></g>
  </svg>
</div>
<div class="activate"><svg viewBox="0 0 260 50"><text x="0" y="20" font-size="19.500" textLength="165">Activate Windows</text><text x="0" y="42" font-size="14.500" textLength="248">Go to Settings to activate Windows.</text></svg></div>
</body>
</html>
```

FILE: styles.css
```css
* { box-sizing: border-box; }
body { margin: 0; width: 1920px; height: 810px; background: #fff; overflow: hidden; position: relative; font-family: "Open Sans", "Noto Sans", sans-serif; color: #333; }
svg { display: block; flex: none; }
.defs { position: absolute; }
.window { width: 1441px; height: 810px; margin-left: 240px; display: flex; flex-direction: column; background: #f9f9f7; }
.mag { width: 17px; height: 17px; }

.titlebar { height: 36px; background: #373733; display: flex; align-items: center; color: #fff; flex: none; }
.quick { width: 84px; height: 22px; margin-left: 18px; }
.doc { font-size: 12px; width: 294px; margin: 6px 9px 0 5px; white-space: nowrap; letter-spacing: .06px; }
.tri { width: 10px; height: 6px; }
.topsearch { width: 422px; height: 26px; margin-left: 201px; background: #d8d8d6; border-radius: 3px; display: flex; align-items: center; padding-left: 18px; color: #47635e; font-size: 13px; gap: 13px; letter-spacing: .1px; }
.topsearch .mag { color: #444; }
.signin { font-size: 12px; width: 39px; margin-left: 173px; white-space: nowrap; letter-spacing: -.1px; }
.avatar { width: 22px; height: 22px; margin-left: 10px; }
.wctl { width: 106px; height: 14px; margin-left: 33px; }

.tabs { height: 37px; display: flex; align-items: flex-start; padding-top: 7px; font-size: 13.5px; line-height: 20px; flex: none; color: #3b3b38; }
.tabs span { white-space: nowrap; height: 25px; }
.t-file { margin-left: 24px; width: 62px; }
.tabs .t-home { width: 40px; font-weight: 600; color: #222; border-bottom: 3px solid #117865; letter-spacing: -.1px; }
.t-insert { margin-left: 33px; width: 70px; }
.t-model { width: 96px; letter-spacing: .1px; }
.t-view { width: 64px; }
.t-opt { width: 93px; }
.t-help { width: 40px; }
.share { margin: -3px 0 0 824px; width: 89px; height: 25px; background: #117865; border: 0; border-radius: 4px; color: #fff; display: flex; align-items: center; gap: 9px; padding: 0 0 0 7px; font: 12.500px "Open Sans", sans-serif; }
.share b { font-weight: 600; letter-spacing: -.5px; margin-right: -4px; }

.ribbon { height: 96px; display: flex; position: relative; flex: none; border-bottom: 1px solid #e5e5e2; font-size: 11.8px; color: #4a4a47; }
.group { border-right: 1px solid #d5d5d2; height: 93px; display: flex; flex-direction: column; }
.group h6 { margin: 0; font-size: 10px; font-weight: 400; line-height: 13px; padding-top: 2px; text-align: center; color: #4a4a47; letter-spacing: -.1px; }
.btns { height: 82px; padding-top: 7px; display: flex; }
.g-clip { width: 170px; } .g-data { width: 404px; } .g-query { width: 124px; } .g-insert { width: 432px; } .g-calc { width: 121px; } .g-sens { width: 78px; } .g-share { width: 63px; }
.g-data .btns { padding-left: 3px; } .g-query .btns { padding-left: 8px; } .g-insert .btns { padding-left: 4px; } .g-calc .btns { padding-left: 8px; }
.btn { display: flex; flex-direction: column; align-items: center; white-space: nowrap; text-align: center; line-height: 17px; letter-spacing: -.1px; flex: none; }
.btn > svg { width: 32px; height: 34px; overflow: visible; }
.btn > span { margin-top: 2px; }
.btn i { display: inline-block; width: 8px; height: 6px; margin-left: 2px; vertical-align: 1px; color: #333; }
.btn i svg { width: 8px; height: 6px; }
.g-data .btn:nth-child(1), .g-data .btn:nth-child(2) { width: 52px; }
.g-data .btn:nth-child(3) { width: 89px; letter-spacing: 0; } .g-data .btn:nth-child(4) { width: 34px; } .g-data .btn:nth-child(5) { width: 50px; } .g-data .btn:nth-child(6) { width: 52px; } .g-data .btn:nth-child(7) { width: 66px; }
.g-query .btn:nth-child(1) { width: 60px; } .g-query .btn:nth-child(2) { width: 47px; }
.g-insert .btn { width: 50px; } .g-insert .btn:last-child { width: 46px; }
.g-calc .btn { width: 52px; }
.g-sens .btn { width: 77px; } .g-share .btn { width: 62px; }
.disabled { color: #bfbfbb; } .btn i.solo { color: #bbb; margin: 0; }
.g-clip .btn { width: 36px; margin: 0 0 0 12px; }
.minis { display: flex; flex-direction: column; margin: -6px 0 0 6px; }
.minis div { height: 25.500px; display: flex; align-items: center; gap: 4px; letter-spacing: 0; white-space: nowrap; }
.minis svg { width: 18px; height: 18px; }
.gallery { width: 268px; height: 66px; margin-top: 1px; border: 1px solid #a5a59c; display: flex; background: #fff; flex: none; }
.cells { width: 250px; padding: 7px 0 0 6px; display: grid; grid-template-columns: repeat(9, 27.500px); grid-auto-rows: 30.500px; }
.cells svg { width: 18px; height: 18px; }
.ax { fill: none; stroke: #444; stroke-width: 1.200; } .bl { fill: #62b1e6; stroke: #2a6d96; } .gr { fill: #d0d0ce; stroke: #777; } .wh { fill: #fff; stroke: #555; }
.more { flex: 1; border-left: 1px solid #a5a59c; display: flex; justify-content: center; align-items: center; padding-top: 6px; }
.collapse { width: 10px; height: 6px; margin: 83px 0 0 35px; }

.work { height: 532px; display: flex; flex: none; background: #fff; }
.rail { width: 43px; background: #f1f1ee; display: flex; flex-direction: column; align-items: center; padding: 12px 2px 0 0; gap: 24px; border-left: 3px solid transparent; border-image: linear-gradient(#117865 0 42px, transparent 42px) 1; }
.canvas { width: 995px; position: relative; flex: none; background: #fff; }
.pageedge { position: absolute; left: 27px; top: 0; width: 941px; height: 530px; border: 2px dotted #55544f; border-top: 0; }
.strip { position: absolute; left: 29px; top: 0; width: 41px; height: 523px; border: 1px solid #17365c; background: #fff; }
.strip svg { width: 39px; height: 108px; }
.visual { position: absolute; background: #dddcda; border-radius: 22px; }
.visual svg { width: 100%; height: 100%; overflow: visible; }
.v-logo { left: 77px; top: 19px; width: 153px; height: 118px; border-radius: 0; background: none; }
.v-gauge { left: 237px; top: 17px; width: 269px; height: 119px; }
.v-pie { left: 519px; top: 17px; width: 242px; height: 119px; }
.v-kpi { left: 770px; top: 18px; width: 182px; height: 118px; }
.v-res { left: 81px; top: 145px; width: 229px; height: 201px; border-radius: 16px; }
.v-month { left: 324px; top: 146px; width: 262px; height: 202px; border-radius: 16px; }
.v-hours { left: 597px; top: 143px; width: 355px; height: 206px; border-radius: 16px; }
.v-topic { left: 83px; top: 359px; width: 276px; height: 163px; border-radius: 14px; }
.v-table { left: 368px; top: 359px; width: 584px; height: 163px; border-radius: 16px; padding: 7px 10px 0 9px; }

text { font-family: "Open Sans", sans-serif; }
.ttl { font-family: Roboto, sans-serif; font-size: 12.500px; fill: #3a3935; stroke: #3a3935; stroke-width: .15; }
.m14 { font-size: 14px; }
.ttl.b { font-family: "Open Sans", sans-serif; }
.ttl.b text { font-weight: 700; font-size: 12px; }
.din { font-family: Roboto, sans-serif; }
.v-gauge .din { font-weight: 300; }
.v-gauge .small text { font-family: Roboto, sans-serif; font-size: 12.500px; font-weight: 400; }
.pwc { font: italic 700 58px "Liberation Serif", serif; fill: #fff; stroke: #333; stroke-width: 1.200; }
.lab { font-size: 8.800px; fill: #8b8a86; letter-spacing: -.2px; }
.end { text-anchor: end; } .mid { text-anchor: middle; }
.val { font-size: 8.800px; fill: #fff; font-weight: 600; letter-spacing: -.1px; }
.leg { font-size: 9.500px; font-weight: 700; fill: #63625e; }
.lg { font-size: 10px; fill: #888; }
.ax-t { font-family: Roboto, sans-serif; font-size: 10.500px; fill: #3f3e3a; stroke: #3f3e3a; stroke-width: .15; }
.tile { font-size: 10px; fill: #fff; font-weight: 600; }
.tnum { font-size: 8.500px; fill: #fff; font-weight: 600; }

table { border-collapse: collapse; width: 562px; table-layout: fixed; font-size: 9.600px; line-height: 14px; color: #2f2f2d; letter-spacing: -.2px; }
th, td { padding: 0 5px 0 4px; font-weight: 400; text-align: right; white-space: nowrap; height: 14px; }
th { height: 19px; padding: 0 5px 4px 0; border-bottom: 1px solid #3da5e8; font-size: 9.600px; position: relative; letter-spacing: -.13px; }
th:first-child, td:first-child { text-align: left; width: 40px; padding: 0 0 0 4px; }
th:first-child { padding-bottom: 4px; }
th:nth-child(2) { width: 104px; } th:nth-child(3) { width: 108px; } th:nth-child(4) { width: 134px; }
thead tr, tbody tr { background: #fcfcfb; }
tbody tr:nth-child(even) { background: #ecebe9; }
td:first-child { border-right: 1px solid #8fb6cf; }
.total td { font-weight: 700; }
s { position: absolute; left: 1px; bottom: 1px; border: 3px solid transparent; border-top: 4px solid #333; border-bottom: 0; }

.filters { width: 212px; border-left: 1px solid #aaa9a2; background: #fff; }
.fhead { height: 85px; border-bottom: 1px solid #b0afb0; padding: 0 13px 0 9px; }
.phead { height: 40px; display: flex; align-items: center; }
h2 { margin: 0; font-size: 16px; font-weight: 700; letter-spacing: -.5px; color: #333; line-height: 20px; }
.filters .phead { padding-left: 3px; }
.filters h2 { margin-left: 8px; width: 118px; }
.eye { width: 14px; height: 9px; margin: 0 17px 0 2px; }
.sbox { height: 32px; margin-top: 7px; border: 1px solid #a5a49f; border-radius: 2px; background: #fff; display: flex; align-items: center; font-size: 12.500px; padding-left: 10px; gap: 14px; color: #4a4a47; letter-spacing: -.1px; }
.frow { display: flex; justify-content: space-between; align-items: center; height: 18px; margin: 17px 12px 0 9px; font-size: 12px; letter-spacing: -.2px; }
.frow em { font-style: normal; letter-spacing: 1px; position: relative; top: -1px; }
.drop { margin: 9px 8px 0 9px; height: 49px; border: 1px solid #c9c9c6; border-radius: 2px; display: flex; align-items: center; justify-content: center; font-size: 12.500px; letter-spacing: -.2px; }
.frow.second { margin-top: 26px; }
.datapane { flex: 1; background: #f0f0ed; padding: 0 4px 0 5px; border-top: 1px solid #ccc; }
.datapane .phead { padding: 0 4px 0 5px; justify-content: space-between; height: 39px; }
.datapane .sbox { height: 30px; padding-left: 8px; gap: 6px; border-color: #77766f; border-radius: 3px; font-size: 13px; letter-spacing: -.2px; }
.node { display: flex; align-items: center; gap: 7px; margin: 12px 0 0 6px; height: 20px; font-size: 12.500px; letter-spacing: -.4px; }

.pagetabs { height: 41px; display: flex; flex: none; border-bottom: 1px solid #e4e4e0; background: #f9f9f7; }
.views { width: 120px; height: 36px; margin: 7px 2px 0 55px; overflow: visible; }
.ptab { width: 80px; height: 37px; margin-top: 4px; background: #fff; border-left: 1px solid #d5d5d2; border-bottom: 4px solid #117865; text-align: center; font-size: 12.500px; font-weight: 600; line-height: 35px; letter-spacing: -.4px; }
.plus { width: 42px; height: 34px; margin-top: 6px; background: #117865; display: flex; align-items: center; justify-content: center; }
.status { height: 26px; display: flex; align-items: center; flex: none; padding-left: 5px; font-size: 12px; letter-spacing: -.1px; color: #5b5b57; border-bottom: 1px solid #222; }
.status > span:first-child { width: 1211px; }
.zoomer { width: 133px; height: 20px; }
.status .pct { margin-left: 14px; width: 25px; letter-spacing: -.5px; }
.fit { width: 18px; height: 14px; margin-left: 16px; }

.taskbar { height: 42px; background: #292126; display: flex; flex: none; color: #eee; }
.start { width: 51px; background: #1b1a2b; display: flex; align-items: center; justify-content: center; }
.tsearch { width: 304px; background: #f5f5f2; color: #45443f; display: flex; align-items: center; padding-left: 12px; gap: 13px; font-size: 14.800px; }
.tsearch .mag { color: #222; }
.apps { display: flex; width: 518px; }
.app { display: flex; justify-content: center; align-items: center; width: 51.500px; height: 42px; flex: none; }
.app svg { width: 25px; height: 25px; }
.app.taskview { width: 53px; padding-right: 4px; }
.app.on { box-shadow: inset 0 -2px #77b9ec; width: 43px; margin: 0 4.250px; }
.app.bi { background: #625b5c; width: 51px; margin: 0 .250px; }
.tray { flex: 1; display: flex; align-items: center; white-space: nowrap; }
.weather { width: 26px; height: 26px; margin-left: 137px; }
.temp { font-size: 13.500px; width: 32px; margin-left: 8px; letter-spacing: -.5px; }
.icons { width: 170px; height: 26px; margin-left: 26px; }
.lang { font-size: 12px; width: 24px; margin-left: 8px; letter-spacing: -.4px; }
.clock { font-size: 11.700px; line-height: 19px; width: 64px; margin-left: 13px; text-align: center; letter-spacing: -.1px; position: relative; top: -1px; }
.note { width: 18px; height: 18px; margin-left: 17px; }
.desk { width: 1px; height: 42px; background: #777; margin-left: 20px; }

.watermark { position: absolute; left: 15px; top: 488px; width: 1890px; height: 213px; display: flex; pointer-events: none; }
.side { width: 225px; background: #04202c; }
.side:nth-child(3) { width: 224px; }
.tint { width: 1441px; background: rgba(3, 123, 219, .25); }
.watermark svg { position: absolute; left: 0; top: 0; width: 1890px; height: 213px; }
.wm-b text { font: 700 44px Inter, sans-serif; fill: #fff; }
.wm-t text { font-size: 32px; fill: #fff; stroke: #fff; stroke-width: .4; }
.activate { position: absolute; left: 1372px; top: 686px; width: 260px; height: 50px; }
.activate text { fill: #8d9096; opacity: .65; }
.activate text + text { opacity: .5; }
```
